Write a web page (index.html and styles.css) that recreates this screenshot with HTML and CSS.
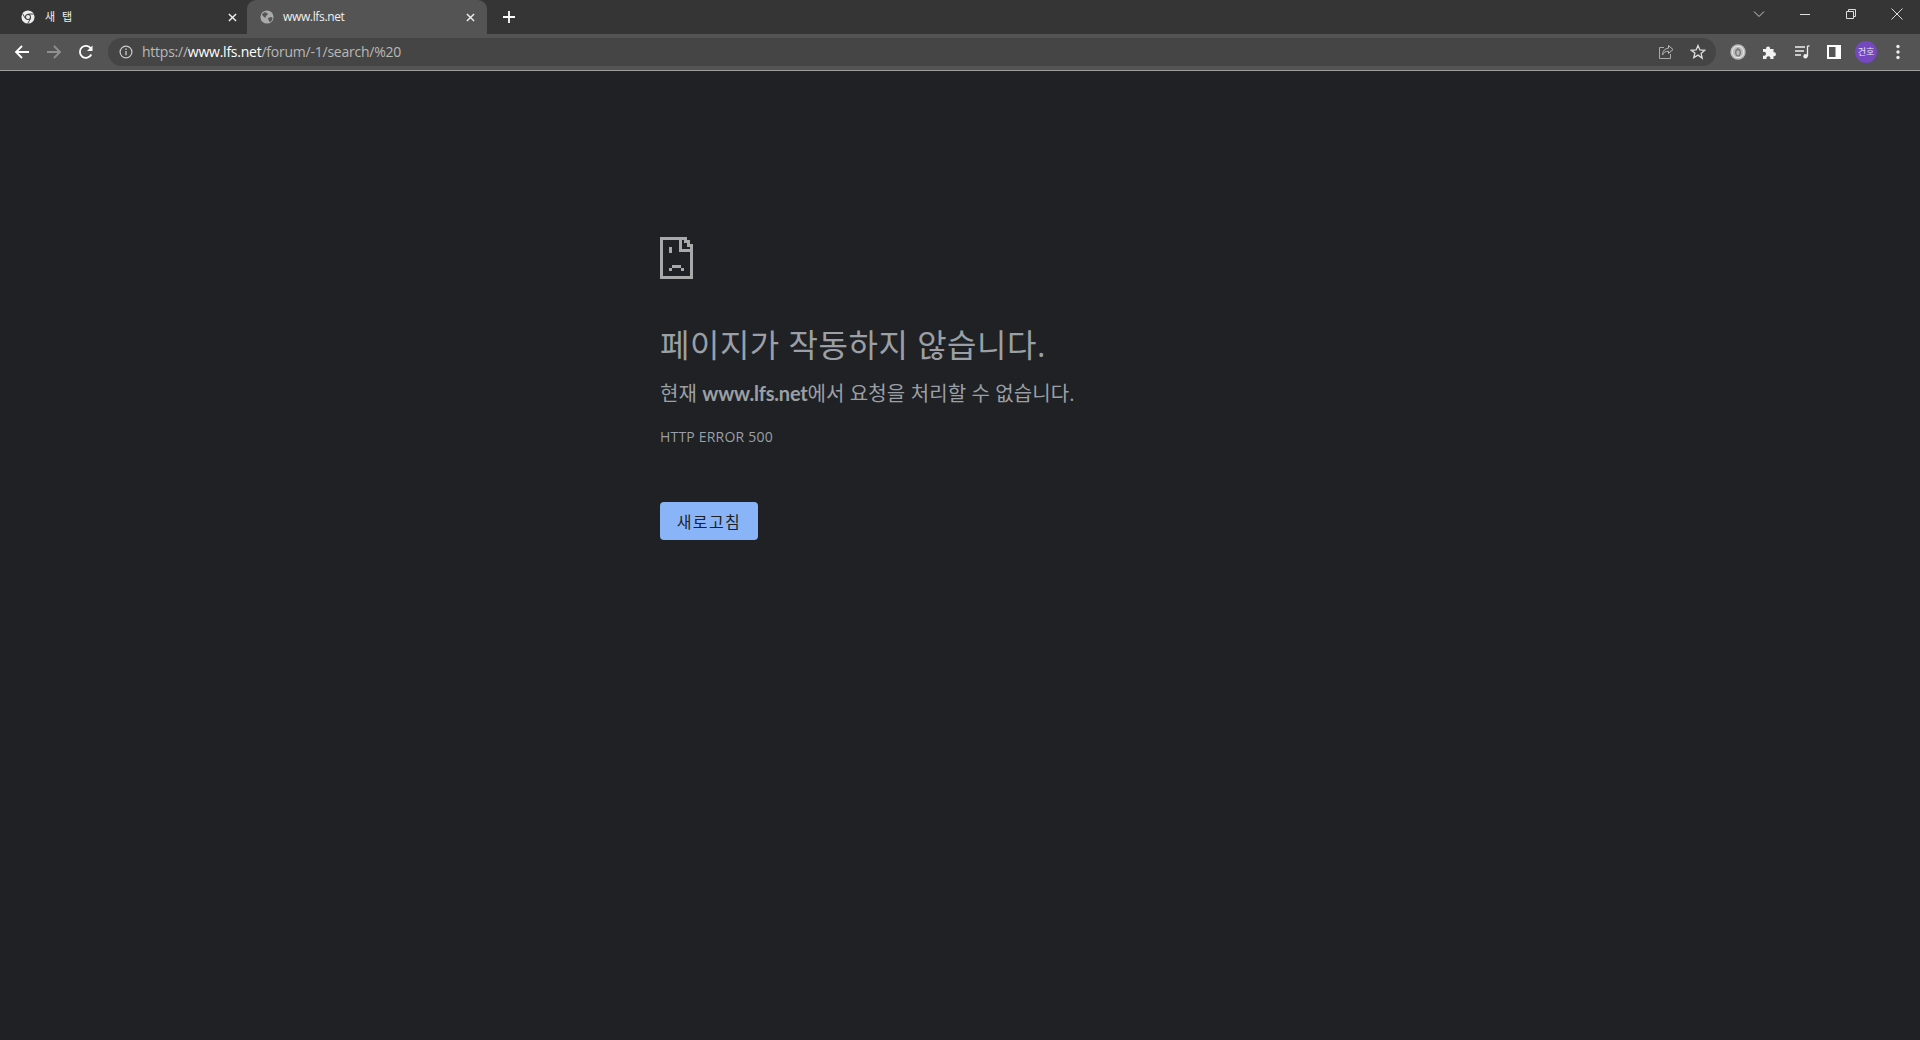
FILE: index.html
```html
<!DOCTYPE html>
<html lang="ko">
<head>
<meta charset="utf-8">
<title>www.lfs.net</title>
<link rel="stylesheet" href="styles.css">
</head>
<body>
<header class="chrome">
  <div class="tabstrip">
    <div class="tab">
      <svg class="favicon" viewBox="0 0 16 16"><circle cx="8" cy="8" r="7.5" fill="#eee"/><circle cx="8" cy="8" r="3.4" fill="#353535"/><circle cx="8" cy="8" r="2.3" fill="#eee"/><path d="M8 4.6h6.6M5 9.7 1.8 4.2M11 9.7l-3.3 5.6" stroke="#353535" stroke-width="1"/></svg>
      <span class="tab-title tab-title-cjk">새 탭</span>
      <svg class="tab-close" viewBox="0 0 10 10"><path d="M1 1l8 8M9 1l-8 8" stroke="#eee" stroke-width="1.6"/></svg>
    </div>
    <div class="tab tab-active">
      <svg class="favicon" viewBox="0 0 16 16"><circle cx="8" cy="8" r="7.5" fill="#aaa"/><path d="M2 5l3-2.500 3 .5 1 2-2 1.500-1 2.500-2-1.500zM9 9l4-1 1.500 1.500-2 4-2-.5z" fill="#555"/></svg>
      <span class="tab-title tab-title-latin">www.lfs.net</span>
      <svg class="tab-close" viewBox="0 0 10 10"><path d="M1 1l8 8M9 1l-8 8" stroke="#eee" stroke-width="1.600"/></svg>
    </div>
    <svg class="new-tab" viewBox="0 0 12 12"><path d="M6 0v12M0 6h12" stroke="#fff" stroke-width="1.800"/></svg>
    <div class="window-controls">
      <svg class="win-icon" viewBox="0 0 12 12"><path d="M1 3.500l5 5 5-5" fill="none" stroke="#ccc" stroke-width="1"/></svg>
      <svg class="win-icon" viewBox="0 0 12 12"><path d="M1 6.500h10" stroke="#ddd" stroke-width="1"/></svg>
      <svg class="win-icon" viewBox="0 0 12 12"><path d="M1.500 3.500h7v7h-7zM3.500 3.500v-2h7v7h-2" fill="none" stroke="#ddd" stroke-width="1"/></svg>
      <svg class="win-icon" viewBox="0 0 12 12"><path d="M.5.500l11 11M11.500.500l-11 11" stroke="#ddd" stroke-width="1"/></svg>
    </div>
  </div>
  <div class="toolbar">
    <div class="nav-buttons">
      <svg class="nav-icon" viewBox="0 0 16 16"><path d="M15 8H2M8 2 2 8l6 6" fill="none" stroke="#fff" stroke-width="1.800"/></svg>
      <svg class="nav-icon" viewBox="0 0 16 16"><path d="M1 8h13M8 2l6 6-6 6" fill="none" stroke="#909090" stroke-width="1.800"/></svg>
      <svg class="nav-icon" viewBox="0 0 16 16"><path d="M13.300 10.500A6 6 0 1 1 13 4.700" fill="none" stroke="#fff" stroke-width="1.800"/><path d="M14.500 1.500v5.500H9z" fill="#fff"/></svg>
    </div>
    <div class="omnibox">
      <svg class="info-icon" viewBox="0 0 14 14"><circle cx="7" cy="7" r="5.900" fill="none" stroke="#ccc" stroke-width="1.200"/><path d="M7 6v4.200M7 3.600v1.400" stroke="#ccc" stroke-width="1.300"/></svg>
      <span class="url">https://<b class="url-host">www.lfs.net</b>/forum/-1/search/%20</span>
      <svg class="omni-action" viewBox="0 0 16 16"><path d="M6 3.500H1.500v11h11V10" fill="none" stroke="#aaa" stroke-width="1"/><path d="M10.500 1.500 15 5.500l-4.500 4V7.200C7.500 7.200 5.500 8.500 4.500 11c0-4 2.500-6.500 6-6.800z" fill="none" stroke="#bbb" stroke-width="1"/></svg>
      <svg class="omni-action" viewBox="0 0 16 16"><path d="M8 1.500l1.900 4.400 4.800.4-3.600 3.100 1.100 4.700L8 11.100l-4.200 2.500 1.100-4.700L1.300 6.300l4.800-.4z" fill="none" stroke="#ddd" stroke-width="1.300"/></svg>
    </div>
    <div class="ext-buttons">
      <svg class="ext-icon" viewBox="0 0 16 16"><circle cx="8" cy="8" r="7.700" fill="#bbb"/><circle cx="8" cy="8" r="5.700" fill="none" stroke="#e8e8e8" stroke-width="1"/><ellipse cx="8" cy="8.500" rx="2.300" ry="3.400" fill="none" stroke="#777" stroke-width="1.300"/><path d="M8 3.800v3" stroke="#777" stroke-width="1"/></svg>
      <svg class="ext-icon" viewBox="0 0 16 16"><path d="M1 5h3.200a2 2 0 1 1 3.800 0h3.500v3.300a2 2 0 1 1 0 3.900V15H8.200a2 2 0 1 0-3.600 0H1v-3.500a2 2 0 1 0 0-3.500z" fill="#f2f2f2"/></svg>
      <svg class="ext-icon" viewBox="0 0 16 16"><path d="M1 3h10M1 7h9M1 11h6" stroke="#eee" stroke-width="1.300"/><path d="M13.500 2v10" stroke="#eee" stroke-width="1.300"/><path d="M13.500 2h2" stroke="#eee" stroke-width="1.300"/><circle cx="11.500" cy="12.300" r="2.200" fill="#eee"/></svg>
      <svg class="ext-icon" viewBox="0 0 16 16"><path d="M1 1h14v14H1z" fill="#fff"/><path d="M3 3h6.500v10H3z" fill="#555"/></svg>
      <div class="avatar">건호</div>
      <svg class="ext-icon" viewBox="0 0 16 16"><circle cx="8" cy="2.500" r="1.700" fill="#eee"/><circle cx="8" cy="8" r="1.700" fill="#eee"/><circle cx="8" cy="13.500" r="1.700" fill="#eee"/></svg>
    </div>
  </div>
</header>
<main class="page">
  <div class="error">
    <svg class="sad-page" viewBox="0 0 33 42" shape-rendering="crispEdges"><path d="M1.500 1.500H20V13h11.500v27.500h-30z" fill="none" stroke="#a9a9a9" stroke-width="3"/><path d="M20 1.500h5v3h3v4h3v4" fill="none" stroke="#a9a9a9" stroke-width="3"/><path d="M9 10h3v6H9zM9 31h3v3H9zM12 28h9v3h-9zM21 31h3v3h-3z" fill="#a9a9a9"/></svg>
    <h1 class="error-title">페이지가 작동하지 않습니다.</h1>
    <p class="error-desc">현재 <strong class="host">www.lfs.net</strong>에서 요청을 처리할 수 없습니다.</p>
    <p class="error-code">HTTP ERROR 500</p>
    <button class="reload">새로고침</button>
  </div>
</main>
</body>
</html>
```
FILE: styles.css
```css
* { box-sizing: border-box; }
html, body { margin: 0; height: 100%; }
body {
  display: flex;
  flex-direction: column;
  height: 1040px;
  overflow: hidden;
  background: #202124;
  font-family: "Open Sans", "Noto Sans CJK KR", sans-serif;
}
.chrome { flex: none; }
.tabstrip {
  height: 34px;
  background: #353535;
  display: flex;
  align-items: flex-start;
}
.tab {
  width: 240px;
  height: 34px;
  display: flex;
  align-items: center;
  padding: 0 6px 0 21px;
  color: #eee;
  font-size: 12px;
}
.tab:first-child { width: 247px; }
.tab-active {
  background: #545454;
  border-radius: 9px 9px 0 0;
  padding-left: 13px;
  padding-right: 8px;
}
.favicon { width: 14px; height: 14px; flex: none; margin-right: 9px; }
.tab-title { flex: 1; letter-spacing: -0.3px; color: #f0f0f0; }
.tab-title-latin { margin-top: -2px; letter-spacing: -0.35px; }
.tab-title-cjk { font-size: 11px; letter-spacing: 2px; padding-left: 1px; margin-top: -2px; }
.tab-close { width: 9px; height: 9px; flex: none; margin-right: 4px; }
.new-tab { width: 12px; height: 12px; margin: 11px 0 0 16px; flex: none; }
.window-controls {
  margin-left: auto;
  display: flex;
  align-items: center;
  gap: 34px;
  height: 28px;
  padding-right: 17px;
}
.win-icon { width: 12px; height: 12px; display: block; }
.toolbar {
  height: 37px;
  background: #545454;
  border-bottom: 1px solid #a0a0a0;
  display: flex;
  align-items: center;
}
.nav-buttons {
  display: flex;
  align-items: center;
  gap: 16px;
  padding-left: 14px;
  width: 108px;
}
.nav-icon { width: 16px; height: 16px; flex: none; }
.omnibox {
  width: 1608px;
  height: 28px;
  background: #454545;
  border-radius: 14px;
  display: flex;
  align-items: center;
  padding: 0 10px 0 11px;
}
.info-icon { width: 14px; height: 14px; flex: none; margin-right: 9px; }
.url { flex: 1; font-size: 14px; line-height: 18px; margin-top: -1px; color: #b8b8b8; letter-spacing: -0.24px; }
.url-host { font-weight: 400; color: #fff; }
.omni-action { width: 16px; height: 16px; flex: none; margin-left: 16px; }
.ext-buttons {
  display: flex;
  align-items: center;
  gap: 16px;
  padding-left: 14px;
}
.ext-icon { width: 16px; height: 16px; flex: none; }
.avatar {
  width: 22px;
  height: 22px;
  margin: 0 -3px;
  border-radius: 50%;
  background: #7548c0;
  color: #e8e0f5;
  font-size: 9px;
  line-height: 22px;
  text-align: center;
  flex: none;
}
.page { flex: 1; padding: 166px 0 0 660px; }
.error { width: 600px; }
.sad-page { display: block; width: 33px; height: 42px; }
.error-title {
  margin: 46px 0 0;
  font-size: 32px;
  line-height: 40px;
  font-weight: 400;
  letter-spacing: 0.5px;
  color: #9aa0a6;
}
.error-desc {
  margin: 14px 0 0;
  font-size: 20px;
  line-height: 28px;
  font-weight: 400;
  letter-spacing: 0.1px;
  color: #9aa0a6;
}
.host { font-family: Lato, "Open Sans", sans-serif; font-weight: 700; letter-spacing: -0.2px; }
.error-code {
  margin: 19px 0 0;
  font-size: 14px;
  line-height: 20px;
  letter-spacing: 0.2px;
  color: #9aa0a6;
}
.reload {
  display: block;
  margin: 55px 0 0;
  width: 98px;
  height: 38px;
  border: 0;
  border-radius: 4px;
  background: #8ab4f8;
  color: #202124;
  font: 400 16px "Open Sans", "Noto Sans CJK KR", sans-serif;
  letter-spacing: 1.4px;
}
```
